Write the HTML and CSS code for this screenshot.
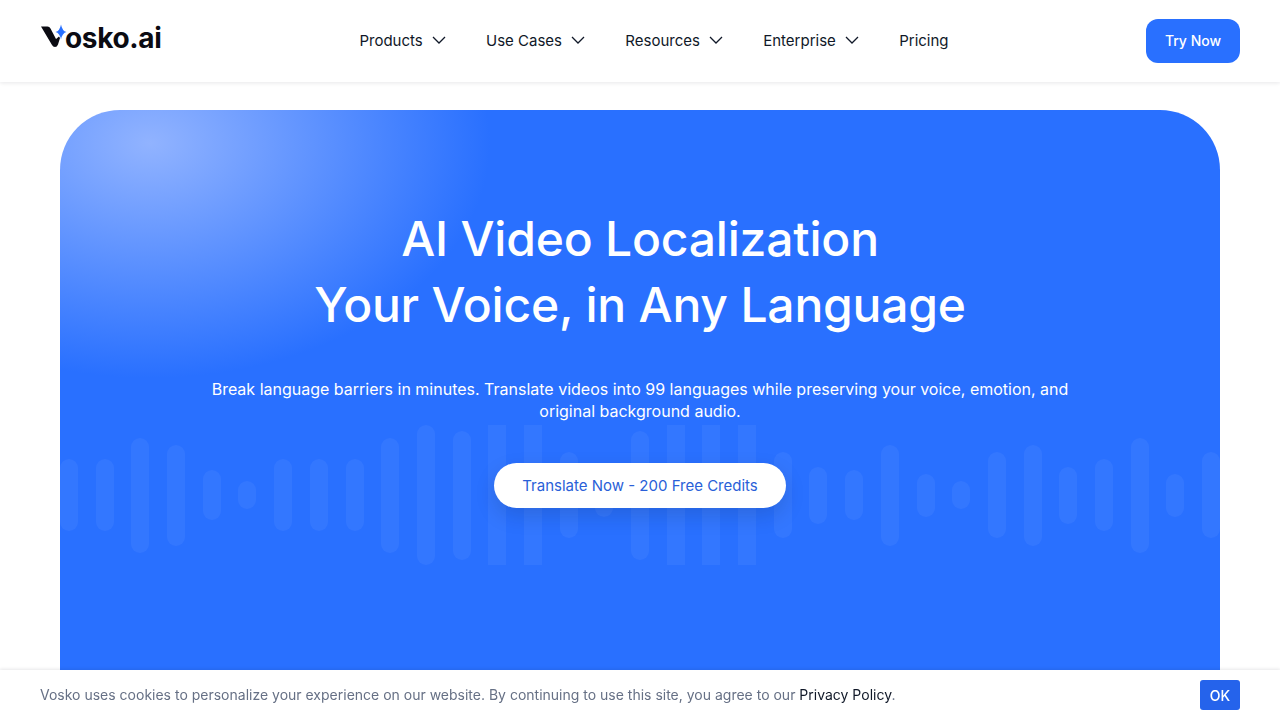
FILE: index.html
```html
<!DOCTYPE html>
<html lang="en">
<head>
    <meta charset="UTF-8">
    <meta name="viewport" content="width=device-width, initial-scale=1.0">
    <title>Vosko.ai - AI Video Localization</title>
    <link rel="stylesheet" href="styles.css">
</head>
<body>
    <header class="site-header">
        <a class="logo" href="#" aria-label="Vosko.ai">
            <svg class="logo-mark" width="27" height="24" viewBox="0 0 27 24" aria-hidden="true">
                <path d="M1 2.500 H7.500 Q9.500 2.500 10.500 4.500 L16 15 L19 12.500 L20 14 L18 20.500 Q17 23 15 23 Q13 23 12 21 Z" fill="#0b0b12"/>
                <path d="M21 0.500 Q22.200 7 26.500 8 Q22.200 9 21 15.500 Q19.800 9 15.500 8 Q19.800 7 21 0.500 Z" fill="#2970ff"/>
            </svg>
            <span class="logo-text">osko.ai</span>
        </a>
        <nav class="main-nav">
            <a href="#">Products
                <svg class="chevron" width="16" height="16" viewBox="0 0 16 16" aria-hidden="true"><path d="M2 5 L8 11 L14 5"/></svg>
            </a>
            <a href="#">Use Cases
                <svg class="chevron" width="16" height="16" viewBox="0 0 16 16" aria-hidden="true"><path d="M2 5 L8 11 L14 5"/></svg>
            </a>
            <a href="#">Resources
                <svg class="chevron" width="16" height="16" viewBox="0 0 16 16" aria-hidden="true"><path d="M2 5 L8 11 L14 5"/></svg>
            </a>
            <a href="#">Enterprise
                <svg class="chevron" width="16" height="16" viewBox="0 0 16 16" aria-hidden="true"><path d="M2 5 L8 11 L14 5"/></svg>
            </a>
            <a href="#">Pricing</a>
        </nav>
        <a class="try-btn" href="#">Try Now</a>
    </header>

    <main class="hero">
        <!-- Decorative waveform behind the text -->
        <div class="wave" aria-hidden="true">
            <span class="h72"></span><span class="h72"></span><span class="h115"></span><span class="h101"></span>
            <span class="h50"></span><span class="h28"></span><span class="h72"></span><span class="h72"></span>
            <span class="h72"></span><span class="h115"></span><span class="h140"></span><span class="h129"></span>
            <span class="full"></span><span class="full"></span><span class="h86"></span><span class="h43"></span>
            <span class="h129"></span><span class="full"></span><span class="full"></span><span class="full"></span>
            <span class="h86"></span><span class="h57"></span><span class="h50"></span><span class="h101"></span>
            <span class="h43"></span><span class="h28"></span><span class="h86"></span><span class="h101"></span>
            <span class="h57"></span><span class="h72"></span><span class="h115"></span><span class="h43"></span>
            <span class="h86"></span>
        </div>
        <div class="hero-content">
            <h1>AI Video Localization<br>Your Voice, in Any Language</h1>
            <p>Break language barriers in minutes. Translate videos into 99 languages while preserving your voice, emotion, and original background audio.</p>
            <a class="cta" href="#">Translate Now - 200 Free Credits</a>
        </div>
    </main>

    <div class="cookie-bar">
        <span>Vosko uses cookies to personalize your experience on our website. By continuing to use this site, you agree to our <a href="#">Privacy Policy</a>.</span>
        <button type="button">OK</button>
    </div>
</body>
</html>
```

FILE: styles.css
```css
/* General Styling */
html, body {
    height: 720px;
    overflow: hidden;
}

body {
    font-family: 'Inter', 'Liberation Sans', sans-serif;
    margin: 0;
    padding: 0;
    background: #fff;
}

a {
    text-decoration: none;
}

/* Header */
.site-header {
    height: 82px;
    padding: 0 40px;
    display: flex;
    justify-content: space-between;
    align-items: center;
    background: #fff;
    box-shadow: 0 1px 4px rgba(16, 24, 40, 0.1);
    box-sizing: border-box;
}

.logo {
    width: 121px;
    height: 44px;
    margin-top: -6px;
    display: flex;
    align-items: center;
    color: #0b0b12;
}

.logo-mark {
    flex: none;
    margin-right: -2px;
    margin-top: -4px;
}

.logo-text {
    font-size: 28px;
    font-weight: 700;
    letter-spacing: -0.35px;
}

.main-nav {
    display: flex;
    align-items: center;
    gap: 39.3px;
    margin-top: -2px;
    margin-left: 1px;
}

.main-nav a {
    display: flex;
    align-items: center;
    gap: 8px;
    font-size: 15px;
    color: #101828;
}

.chevron {
    fill: none;
    stroke: #101828;
    stroke-width: 1.3;
}

.try-btn {
    width: 94px;
    height: 44px;
    margin-top: -1px;
    display: flex;
    justify-content: center;
    align-items: center;
    background: #2970ff;
    color: #fff;
    font-size: 14px;
    font-weight: 500;
    border-radius: 12px;
}

/* Hero */
.hero {
    position: relative;
    height: 640px;
    margin: 28px 60px 0;
    padding-top: 96px;
    box-sizing: border-box;
    text-align: center;
    border-radius: 60px 60px 0 0;
    background: radial-gradient(ellipse 340px 235px at 90px 33px, #91b3ff, #2970ff);
    overflow: hidden;
}

.wave {
    position: absolute;
    top: 315px;
    left: 0;
    right: 0;
    height: 140px;
    display: flex;
    justify-content: space-between;
    align-items: center;
    overflow: hidden;
}

.wave span {
    width: 18px;
    flex: none;
    background: rgba(255, 255, 255, 0.05);
    border-radius: 9px;
}

.wave .full {
    height: 140px;
    border-radius: 0;
}

.wave .h28 { height: 28px; }
.wave .h43 { height: 43px; }
.wave .h50 { height: 50px; }
.wave .h57 { height: 57px; }
.wave .h72 { height: 72px; }
.wave .h86 { height: 86px; }
.wave .h101 { height: 101px; }
.wave .h115 { height: 115px; }
.wave .h129 { height: 129px; }
.wave .h140 { height: 140px; }

.hero-content {
    position: relative;
    display: flex;
    flex-direction: column;
    align-items: center;
    color: #fff;
}

.hero-content h1 {
    margin: 0;
    font-size: 48px;
    font-weight: 550;
    line-height: 66px;
    letter-spacing: -0.2px;
}

.hero-content p {
    width: 880px;
    margin: 40px 0 0;
    font-size: 16px;
    font-weight: 400;
    line-height: 22px;
}

.cta {
    width: 292px;
    height: 45px;
    margin-top: 41px;
    display: flex;
    justify-content: center;
    align-items: center;
    background: #fff;
    color: #2a5fd8;
    font-size: 15px;
    font-weight: 400;
    border-radius: 23px;
    box-shadow: 0 8px 20px rgba(16, 24, 40, 0.15);
}

/* Cookie bar */
.cookie-bar {
    position: fixed;
    left: 0;
    right: 0;
    bottom: 0;
    height: 50px;
    padding: 0 40px;
    display: flex;
    justify-content: space-between;
    align-items: center;
    background: #fff;
    box-shadow: 0 -1px 3px rgba(16, 24, 40, 0.1);
    box-sizing: border-box;
    font-size: 14px;
    color: #667085;
}

.cookie-bar span {
    margin-top: -1px;
}

.cookie-bar a {
    color: #101828;
}

.cookie-bar button {
    width: 40px;
    height: 30px;
    padding: 0;
    border: none;
    border-radius: 3px;
    background: #2563eb;
    color: #fff;
    font-family: inherit;
    font-size: 14px;
    font-weight: 500;
}
```
